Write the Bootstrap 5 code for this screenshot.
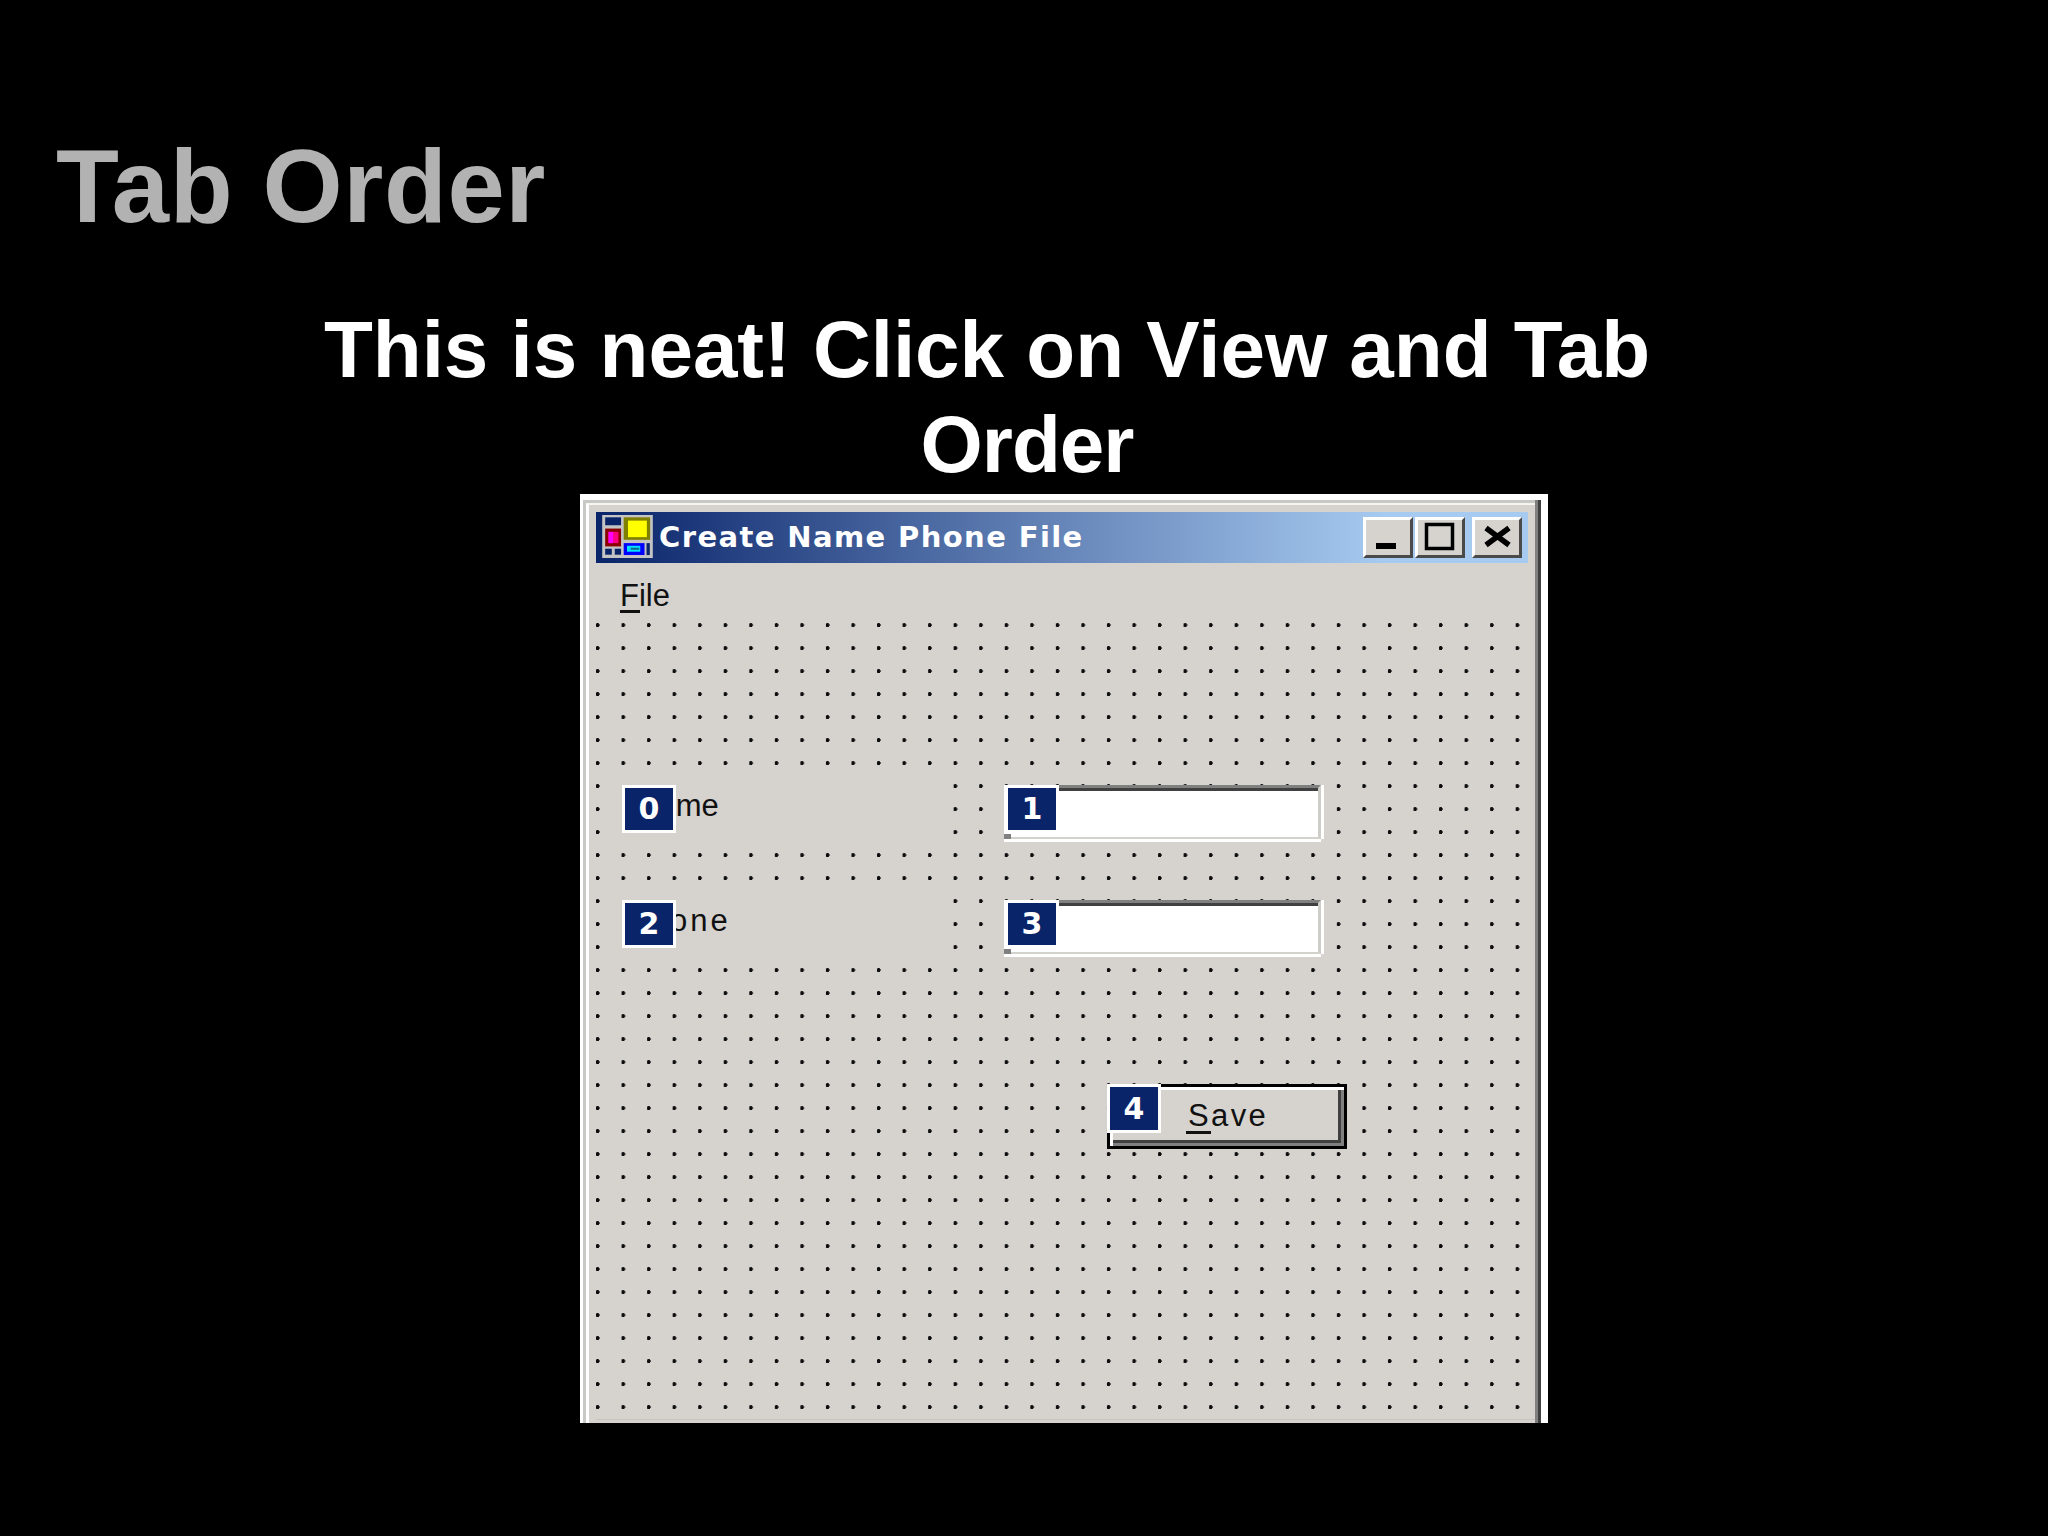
<!DOCTYPE html>
<html lang="en">
<head>
<meta charset="utf-8">
<title>Tab Order</title>
<link href="https://cdn.jsdelivr.net/npm/bootstrap@5.3.0/dist/css/bootstrap.min.css" rel="stylesheet">
<style>
html,body{background:#000;margin:0}
body{width:2048px;height:1536px;overflow:hidden;font-family:"Liberation Sans",Arial,sans-serif}
.slide-title{font:700 103px/1 "Liberation Sans",Arial,sans-serif;letter-spacing:.6px;color:#b2b2b2;margin:0;padding:135px 0 0 56px;height:302px}
.slide-sub{font:700 80px/95px "Liberation Sans",Arial,sans-serif;color:#fff;margin:0;text-align:center;width:2054px;height:192px}
.slide-sub span{display:block}
.slide-sub .first-line{padding-right:80px;white-space:nowrap}
.slide-sub .second-line{letter-spacing:-1px}
.form-window{width:968px;height:929px;margin-left:580px;background:#fff;padding:6px 7px 0 3px}
.frame-mid{height:100%;background:#c8c8c4;padding:3px 0 0 3px;position:relative}
.frame-in{height:100%;background:#d6d3cf;border-left:3px solid #fff;border-top:2px solid #f4f4f2;padding:7px 0 0 7px;margin-right:6px;position:relative}
.frame-edge{position:absolute;right:0;top:0;bottom:0;width:6px;background:#404040;border-left:3px solid #808080}
.cap-bar{height:51px;width:932px;background:linear-gradient(90deg,#0a246a 0,#a6caf0 790px);padding:3px 6px 0 6px;align-items:flex-start}
.cap-bar svg{display:block;flex:none}
.cap-text{font:700 29px/44px "DejaVu Sans",sans-serif;letter-spacing:1.4px;color:#fff;margin-left:6px;white-space:nowrap}
.cap-btn{width:50px;height:41px;margin-top:2px;background:#d6d3cf;border-style:solid;border-width:3px;border-color:#fff #4a4a4a #4a4a4a #fff;flex:none}
.cap-btn svg{width:100%;height:100%;display:block}
.cap-min{margin-right:2px}
.cap-max{margin-right:7px}
.menu-strip{height:60px;padding-left:24px;font-size:31px;line-height:38px;color:#111;padding-top:14px}
.ul-key{position:relative;display:inline-block}
.ul-key::after{content:"";position:absolute;left:0;right:-1px;bottom:2px;height:3px;background:#111}
.ul-save::after{left:-2px;right:0;bottom:1px}
.design-canvas{position:relative;height:797px;border-bottom:1px solid #c8c5c0;background-image:radial-gradient(circle at 1.6px 2.1px,#0c0c0c 1.7px,rgba(12,12,12,0) 2.3px);background-size:25.55px 23px}
.ctl{position:absolute}
.lbl{background:#d6d3cf;font-size:31px;line-height:40px;color:#111;left:14px;width:335px;height:70px;padding:11px 0 0 26px}
.lbl-name{top:152px}
.lbl-phone{top:267px;padding-left:16px;letter-spacing:3px}
.txt-box{background:#fff;border-style:solid;border-width:3px 3px 2px 3px;border-color:#808080 #cfcdc8 #d4d2cc #fff;box-shadow:inset 0 3px 0 #404040,0 3px 0 #fff,3px 0 0 #fff;left:408px;width:317px;height:54px}
.txt-box::after{content:"";position:absolute;left:-3px;bottom:-2px;width:7px;height:5px;background:#808080}
.row-a{top:162px}
.row-b{top:277px}
.tab-tag{position:absolute;background:#0a246a;color:#fff;border:3px solid #fff;display:flex;align-items:center;justify-content:center;font:700 30px/1 "DejaVu Sans",sans-serif;z-index:2;height:48px;width:54px}
.tag-left{left:26px}
.tag-mid{left:408px;width:55px;border-left-width:4px}
.tag-btn{left:511px;top:461px;height:49px}
.push-btn{background:#d6d3cf;border:3px solid #000;box-shadow:inset 3px 3px 0 #fff,inset -3px -3px 0 #808080,inset -6px -6px 0 #404040;left:511px;top:461px;width:240px;height:65px;font-size:31px;color:#111;letter-spacing:2.4px;padding:10px 0 0 78px;line-height:38px}
</style>
</head>
<body>
<h1 class="slide-title">Tab Order</h1>
<h2 class="slide-sub"><span class="first-line">This is neat! Click on View and Tab</span><span class="second-line">Order</span></h2>
<div class="form-window">
 <div class="frame-mid">
  <div class="frame-edge"></div>
  <div class="frame-in">
   <div class="cap-bar d-flex">
    <svg width="51" height="43" viewBox="97 75 153 130" aria-hidden="true">
     <rect x="97" y="75" width="153" height="130" fill="#c4c4c4"/>
     <rect x="106" y="82" width="48" height="24" fill="#0a246a"/>
     <rect x="106" y="116" width="48" height="54" fill="#8b0000"/>
     <rect x="116" y="126" width="30" height="34" fill="#ff0080"/>
     <rect x="116" y="126" width="14" height="34" fill="#ff00ff"/>
     <rect x="162" y="82" width="80" height="68" fill="#808000"/>
     <rect x="175" y="92" width="57" height="50" fill="#ffff00"/>
     <rect x="106" y="177" width="20" height="18" fill="#0a246a"/>
     <rect x="135" y="177" width="19" height="18" fill="#0a246a"/>
     <rect x="162" y="160" width="63" height="36" fill="#0000ff"/>
     <rect x="172" y="168" width="40" height="18" fill="#00e0ff"/>
     <rect x="183" y="174" width="26" height="6" fill="#0a6a8a"/>
     <rect x="231" y="160" width="10" height="36" fill="#0a246a"/>
    </svg>
    <span class="cap-text">Create Name Phone File</span>
    <span class="flex-grow-1"></span>
    <span class="cap-btn cap-min"><svg viewBox="0 0 44 35" aria-hidden="true"><rect x="10" y="23" width="20" height="6" fill="#000"/></svg></span>
    <span class="cap-btn cap-max"><svg viewBox="0 0 44 35" aria-hidden="true"><rect x="8.5" y="4.5" width="26" height="24" fill="none" stroke="#000" stroke-width="3.5"/></svg></span>
    <span class="cap-btn"><svg viewBox="0 0 44 35" aria-hidden="true"><path d="M11 8 L34 25 M34 8 L11 25" stroke="#000" stroke-width="5.5" fill="none"/></svg></span>
   </div>
   <div class="menu-strip"><span class="ul-key">F</span>ile</div>
   <div class="design-canvas">
    <div class="ctl lbl lbl-name">Name</div>
    <div class="tab-tag tag-left row-a">0</div>
    <div class="ctl lbl lbl-phone">Phone</div>
    <div class="tab-tag tag-left row-b">2</div>
    <div class="ctl txt-box row-a"></div>
    <div class="tab-tag tag-mid row-a">1</div>
    <div class="ctl txt-box row-b"></div>
    <div class="tab-tag tag-mid row-b">3</div>
    <div class="ctl push-btn"><span class="ul-key ul-save">S</span>ave</div>
    <div class="tab-tag tag-btn">4</div>
   </div>
  </div>
 </div>
</div>
<script src="https://cdn.jsdelivr.net/npm/bootstrap@5.3.0/dist/js/bootstrap.bundle.min.js"></script>
</body>
</html>
